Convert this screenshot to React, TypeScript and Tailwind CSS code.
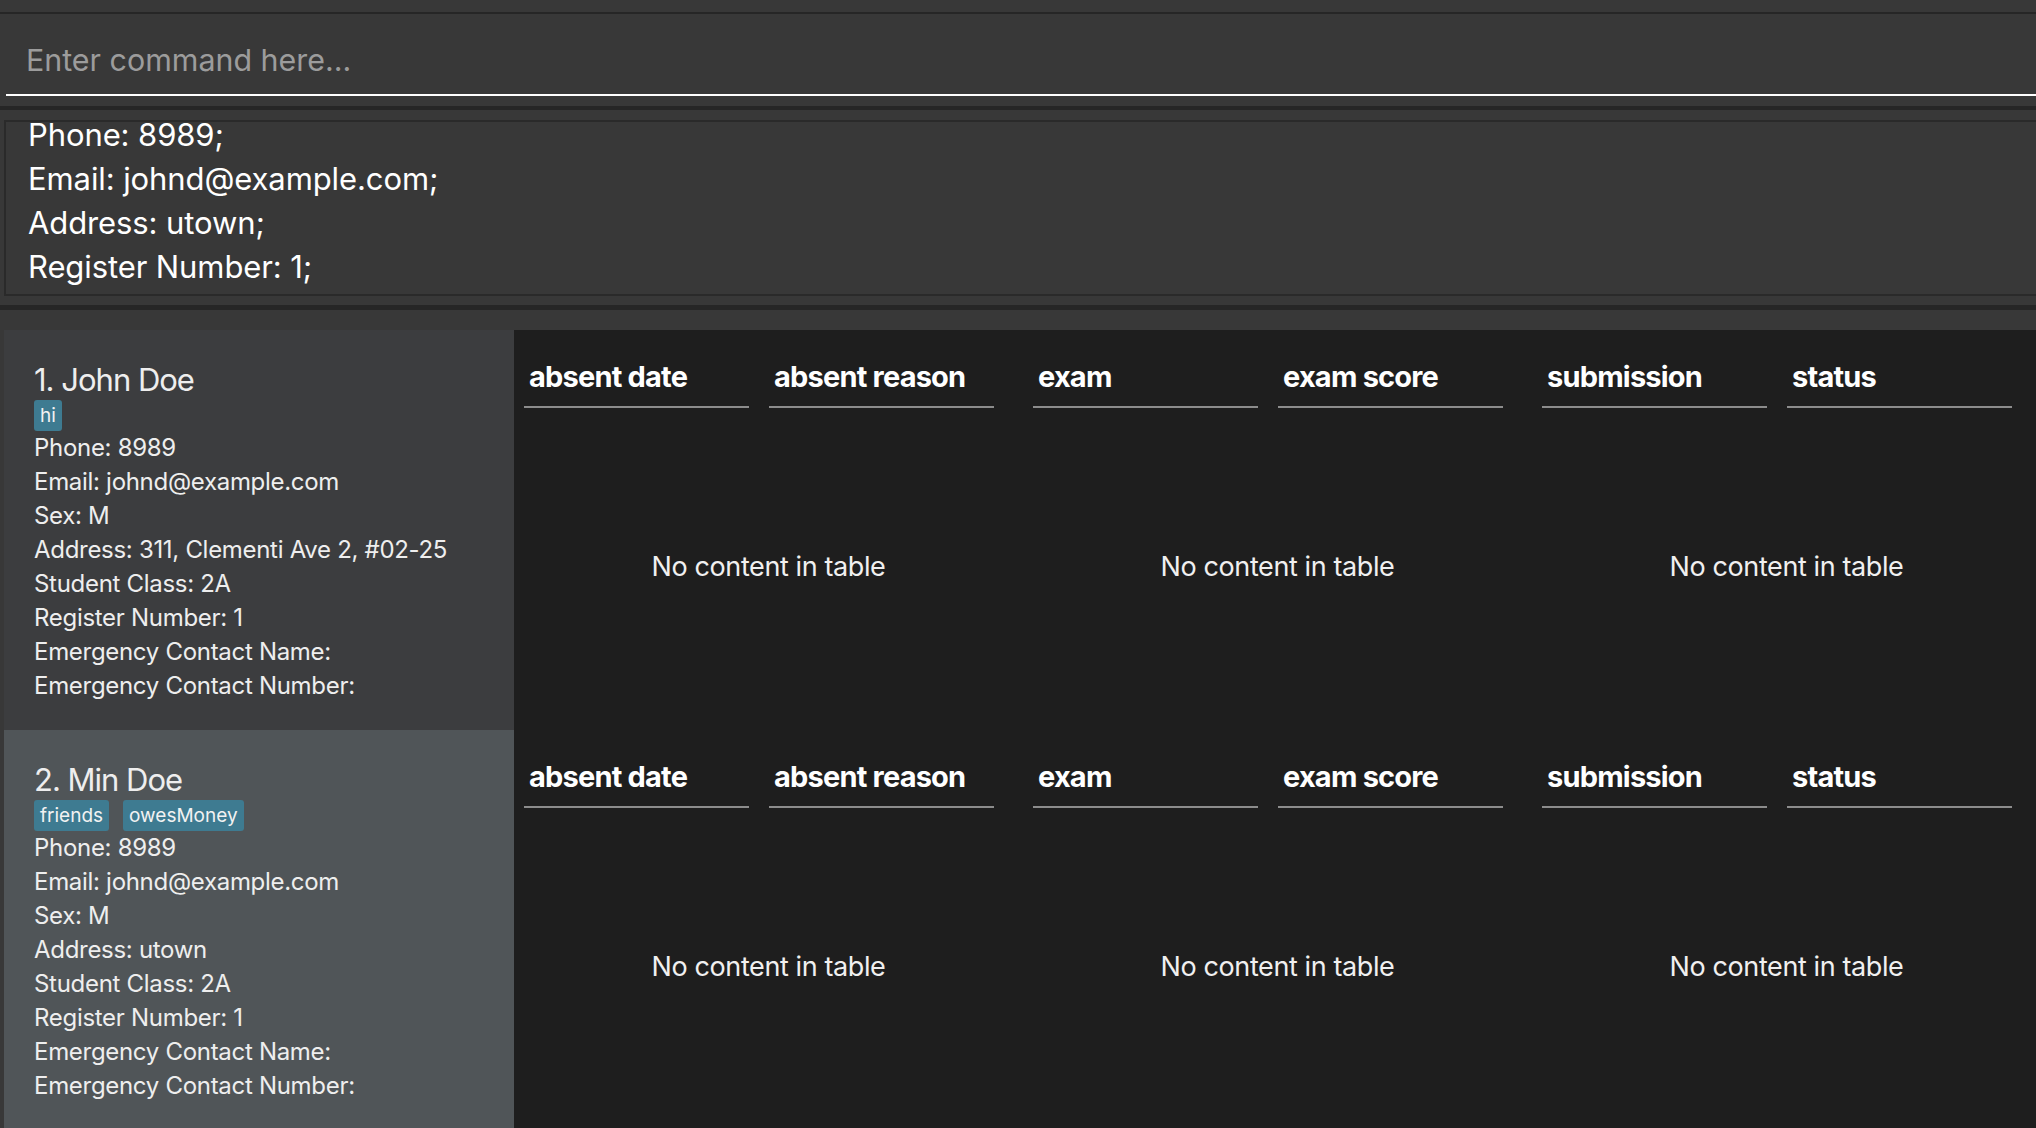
import React from "react";

type Student = {
  idx: number;
  name: string;
  tags: string[];
  address: string;
  card: string;
};

const students: Student[] = [
  { idx: 1, name: "John Doe", tags: ["hi"], address: "311, Clementi Ave 2, #02-25", card: "bg-[#3c3d3f]" },
  { idx: 2, name: "Min Doe", tags: ["friends", "owesMoney"], address: "utown", card: "bg-[#505558]" },
];

const tables: [string, string][] = [
  ["absent date", "absent reason"],
  ["exam", "exam score"],
  ["submission", "status"],
];

function Table({ cols }: { cols: [string, string] }) {
  return (
    <div className="w-[509px] shrink-0 h-full flex flex-col pt-[29px]">
      <div className="flex pl-[10px] gap-[20px]">
        {cols.map((c) => (
          <div key={c} className="w-[225px] border-b-2 border-[#8c8c8c] pb-[11px] pl-[5px]">
            <span className="text-[29px] leading-[36px] font-bold tracking-[-0.8px] text-white whitespace-nowrap">{c}</span>
          </div>
        ))}
      </div>
      <div className="flex-1 flex items-center justify-center pb-[4px]">
        <span className="text-[27px] leading-[36px] tracking-[-0.4px] text-[#f0f0f0]">No content in table</span>
      </div>
    </div>
  );
}

function Row({ s }: { s: Student }) {
  const lines = [
    "Phone: 8989",
    "Email: johnd@example.com",
    "Sex: M",
    `Address: ${s.address}`,
    "Student Class: 2A",
    "Register Number: 1",
    "Emergency Contact Name:",
    "Emergency Contact Number:",
  ];
  return (
    <div className="flex h-[400px] shrink-0">
      <div className={`w-[510px] shrink-0 ${s.card} pl-[30px] pt-[30px] text-[#eeeeee]`}>
        <div className="text-[31px] leading-[40px] tracking-[-1px]">
          {s.idx}. {s.name}
        </div>
        <div className="flex gap-[14px] h-[31px] items-start">
          {s.tags.map((t) => (
            <span
              key={t}
              className="h-[31px] px-[6px] rounded-[3px] bg-[#3e7b91] text-[19px] leading-[31px] text-[#f2f2f2]"
            >
              {t}
            </span>
          ))}
        </div>
        {lines.map((l) => (
          <div key={l} className="text-[24px] leading-[34px] tracking-[-0.3px] whitespace-nowrap">
            {l}
          </div>
        ))}
      </div>
      <div className="flex-1 bg-[#1e1e1e] flex overflow-hidden">
        {tables.map((c) => (
          <Table key={c[0]} cols={c} />
        ))}
      </div>
    </div>
  );
}

export default function App() {
  return (
    <div className="w-[2036px] h-[1128px] overflow-hidden bg-[#383838] flex flex-col font-['Inter',sans-serif]">
      <div className="h-[12px] shrink-0" />
      <div className="h-[2px] shrink-0 bg-[#262626]" />
      <div className="pl-[6px] shrink-0">
        <div className="h-[82px] border-b-2 border-white pl-[20px] pt-[26px]">
          <input
            className="w-full bg-transparent outline-none text-[30.4px] leading-[40px] text-white placeholder:text-[#9c9c9c] font-['Inter',sans-serif]"
            placeholder="Enter command here..."
          />
        </div>
      </div>
      <div className="h-[10px] shrink-0" />
      <div className="h-[4px] shrink-0 bg-[#262626]" />
      <div className="h-[10px] shrink-0" />
      <div className="pl-[4px] shrink-0">
        <div className="h-[176px] border-2 border-r-0 border-[#2a2a2a] pl-[22px]">
          <div className="-mt-[9px] text-[31px] leading-[44px] text-white tracking-[-0.1px]">
            <div>Phone: 8989;</div>
            <div>Email: johnd@example.com;</div>
            <div>Address: utown;</div>
            <div>Register Number: 1;</div>
          </div>
        </div>
      </div>
      <div className="h-[9px] shrink-0" />
      <div className="h-[5px] shrink-0 bg-[#262626]" />
      <div className="h-[20px] shrink-0" />
      <div className="flex-1 min-h-0 pl-[4px] flex flex-col overflow-hidden">
        {students.map((s) => (
          <Row key={s.idx} s={s} />
        ))}
      </div>
    </div>
  );
}
